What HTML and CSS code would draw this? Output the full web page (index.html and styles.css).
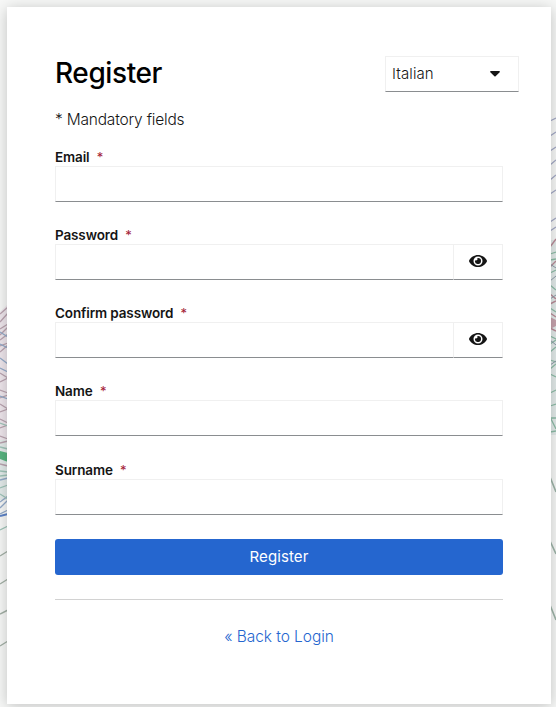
FILE: index.html
```html
<!DOCTYPE html>
<html lang="en">
<head>
<meta charset="UTF-8" />
<meta name="viewport" content="width=device-width, initial-scale=1" />
<title>Register</title>
<link rel="stylesheet" href="styles.css">
</head>
<body>

<!-- Line pattern behind the card -->
<svg class="backdrop" viewBox="0 0 556 707" fill="none" aria-hidden="true">
  <path d="M0 312l8-8v136H0z" fill="#eee6ec" />
  <path d="M0 440h8v60H0zM550 240h6v195h-6z" fill="#e3ebea" />
  <g stroke="#b9a3af" stroke-width="1.3">
    <path d="M0 314l8-7M0 322l8-9M0 329l8-5M0 335l8-8M0 340l8-6M0 346l8-3M0 352l8-7M0 373l8 5M0 382l8-4M0 390l8 3M0 398l8-3M0 404l8 5M0 412l8-3M0 419l8 4M0 428l8-3M0 436l8 3M0 443l8-2M0 464l8 2" />
  </g>
  <g stroke="#93aac8" stroke-width="1.3">
    <path d="M0 332l8 5M0 344l8 4M0 358l8 6M0 368l8 4M0 396l8 3M0 480l8-2M0 502l8-6M0 508l8-8M0 514l8-4" />
  </g>
  <path d="M0 516l8-2" stroke="#5c83c8" stroke-width="2" />
  <path d="M0 451l8 2v9l-8-3z" fill="#58b580" />
  <g stroke="#9fc4b8" stroke-width="1.3">
    <path d="M0 423l8 3M0 447l8 2M0 471l8 1M0 476l8-1M0 488l8-3M0 494l8 5M0 530l8-4" />
  </g>
  <g stroke="#a3b0a6" stroke-width="1.4">
    <path d="M0 556l8-5M0 584l8-5M0 614l8-4M0 646l8-5" />
  </g>
  <g stroke="#a3a9c5" stroke-width="1.3">
    <path d="M550 121l6-3M550 136l6-4M550 151l6-4M550 165l6-5M550 180l6-5M550 194l6-4M550 222l6-4M550 231l6-4" />
  </g>
  <g stroke="#b98c98" stroke-width="1.4">
    <path d="M550 247l6-8M550 267l6-6M550 294l6 5M550 304l6-3M550 313l6 4M550 320l6 4M550 328l6 3" />
  </g>
  <path d="M550 317l6 3v6l-6 3z" fill="#c7a4ae" />
  <g stroke="#8fbda8" stroke-width="1.3">
    <path d="M550 254l6-2M550 260l6-1M550 273l6-3M550 285l6 5M550 308l6 4M550 336l6 3M550 344l6-4M550 352l6-5M550 360l6 2M550 369l6-5M550 374l6 3M550 393l6-3M550 406l6-2M550 418h6M550 417l6 12M550 432l6-1" />
  </g>
  <g stroke="#8d9aa8">
    <path d="M550 264l6 4M550 281l6-5M550 299l6-4M550 340l6 5M550 365l6-4" />
  </g>
  <g stroke="#9eb4a8" stroke-width="1.6">
    <path d="M550 477l6 15M550 541l6 13M550 605l6 15" />
  </g>
</svg>

<main class="card">
  <header class="card-header">
    <h1>Register</h1>
    <button type="button" class="locale" aria-haspopup="listbox">
      <span>Italian</span>
      <svg class="caret" viewBox="0 0 10 6" aria-hidden="true"><path d="M.8 0h8.4a.7.7 0 0 1 .5 1.2L5.6 5.3a.9.9 0 0 1-1.2 0L.3 1.2A.7.7 0 0 1 .8 0z" /></svg>
    </button>
  </header>

  <form class="register-form">
    <p class="mandatory">* Mandatory fields</p>

    <div class="field">
      <label for="email">Email <span class="required">*</span></label>
      <input type="text" id="email" />
    </div>

    <div class="field">
      <label for="password">Password <span class="required">*</span></label>
      <div class="input-group">
        <input type="password" id="password" />
        <button type="button" class="toggle" aria-label="Show password">
          <svg viewBox="0 0 576 512" aria-hidden="true"><path d="M572.5 241.4C518.3 135.6 410.9 64 288 64S57.7 135.6 3.5 241.4a32.4 32.4 0 0 0 0 29.2C57.7 376.4 165.1 448 288 448s230.3-71.6 284.5-177.4a32.4 32.4 0 0 0 0-29.2zM288 400a144 144 0 1 1 144-144 143.9 143.9 0 0 1-144 144zm0-240a95.3 95.3 0 0 0-25.3 3.8 47.9 47.9 0 0 1-66.9 66.9A95.8 95.8 0 1 0 288 160z" /></svg>
        </button>
      </div>
    </div>

    <div class="field">
      <label for="password-confirm">Confirm password <span class="required">*</span></label>
      <div class="input-group">
        <input type="password" id="password-confirm" />
        <button type="button" class="toggle" aria-label="Show password">
          <svg viewBox="0 0 576 512" aria-hidden="true"><path d="M572.5 241.4C518.3 135.6 410.9 64 288 64S57.7 135.6 3.5 241.4a32.4 32.4 0 0 0 0 29.2C57.7 376.4 165.1 448 288 448s230.3-71.6 284.5-177.4a32.4 32.4 0 0 0 0-29.2zM288 400a144 144 0 1 1 144-144 143.9 143.9 0 0 1-144 144zm0-240a95.3 95.3 0 0 0-25.3 3.8 47.9 47.9 0 0 1-66.9 66.9A95.8 95.8 0 1 0 288 160z" /></svg>
        </button>
      </div>
    </div>

    <div class="field">
      <label for="name">Name <span class="required">*</span></label>
      <input type="text" id="name" />
    </div>

    <div class="field">
      <label for="surname">Surname <span class="required">*</span></label>
      <input type="text" id="surname" />
    </div>

    <button type="submit" class="submit">Register</button>
  </form>

  <footer class="card-footer">
    <a href="#">« Back to Login</a>
  </footer>
</main>

</body>
</html>
```

FILE: styles.css
```css
* {
  box-sizing: border-box;
}
body {
  margin: 0;
  padding: 7px 5px 3px 7px;
  height: 707px;
  overflow: hidden;
  background: #f7f8f7;
  font-family: Inter, "Open Sans", sans-serif;
  font-size: 16px;
  color: #151515;
}
.backdrop {
  position: absolute;
  top: 0;
  left: 0;
  width: 556px;
  height: 707px;
}

/* Card */
.card {
  position: relative;
  height: 697px;
  padding: 49px 48px 0;
  background: #fff;
  box-shadow: 0 2px 14px rgba(3, 3, 3, 0.22);
}
.card-header {
  display: flex;
  justify-content: space-between;
  height: 36px;
  margin-right: -16px;
}
h1 {
  margin: 0;
  font-size: 28px;
  line-height: 34px;
  font-weight: 450;
  letter-spacing: -0.4px;
  color: #000;
}
.locale {
  display: flex;
  align-items: center;
  justify-content: space-between;
  width: 134px;
  height: 36px;
  padding: 0 18px 1px 6px;
  border: 1px solid #f0f0f0;
  border-bottom-color: #8a8d90;
  background: #fff;
  font: inherit;
  font-size: 15px;
  font-weight: 350;
  letter-spacing: 0.1px;
  color: #151515;
}
.caret {
  width: 10px;
  height: 6px;
  fill: #151515;
}

/* Form */
.mandatory {
  margin: 16px 0 17px;
  line-height: 24px;
  font-size: 15.5px;
  font-weight: 350;
  letter-spacing: -0.2px;
}
.field {
  display: flex;
  flex-direction: column;
  margin-bottom: 25.15px;
}
.field:last-of-type {
  margin-bottom: 24.4px;
}
label {
  height: 17px;
  font-size: 13.5px;
  line-height: 17px;
  font-weight: 600;
  letter-spacing: -0.13px;
}
.required {
  margin-left: 4px;
  font-weight: 400;
  font-size: 13px;
  color: #a32035;
}
input {
  width: 100%;
  height: 36px;
  padding: 6px 8px;
  border: 1px solid #f0f0f0;
  border-bottom-color: #8a8d90;
  border-radius: 0;
  background: #fff;
  font: inherit;
}
.input-group {
  display: flex;
}
.toggle {
  display: flex;
  flex: 0 0 50px;
  align-items: center;
  justify-content: center;
  height: 36px;
  margin-left: -1px;
  padding: 0 0 2px;
  border: 1px solid #f0f0f0;
  border-bottom-color: #8a8d90;
  background: #fff;
}
.toggle svg {
  width: 18px;
  height: 16px;
  fill: #151515;
}
.submit {
  display: block;
  width: 100%;
  height: 36px;
  padding: 0;
  border: 0;
  border-radius: 3px;
  background: #2566cf;
  color: #fff;
  font: inherit;
  font-size: 15px;
  letter-spacing: 0.1px;
}

/* Footer */
.card-footer {
  margin-top: 24px;
  padding-top: 24px;
  border-top: 1px solid #d2d2d2;
  text-align: center;
  line-height: 24px;
}
.card-footer a {
  color: #2566cf;
  font-size: 15.5px;
  font-weight: 350;
  letter-spacing: -0.05px;
  text-decoration: none;
}
```
